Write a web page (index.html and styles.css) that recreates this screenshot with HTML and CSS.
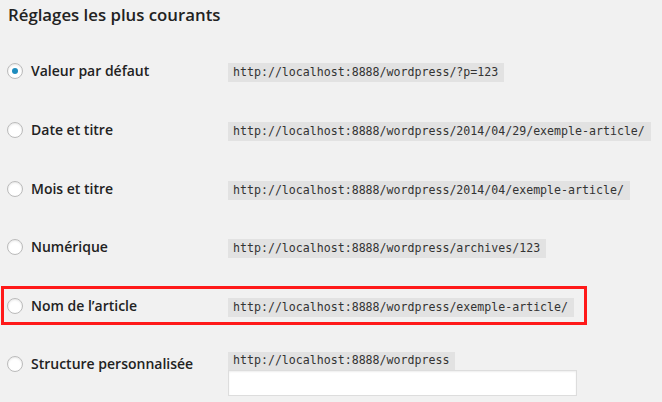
FILE: index.html
```html
<!DOCTYPE html>
<html lang="fr">
<head>
<meta charset="utf-8">
<link rel="stylesheet" href="styles.css">
</head>
<body>
<div class="page">
  <h3 class="title">Réglages les plus courants</h3>
  <div class="rows">
    <div class="row">
      <label class="label"><span class="radio checked"></span>Valeur par défaut</label>
      <div class="value"><code>http://localhost:8888/wordpress/?p=123</code></div>
    </div>
    <div class="row">
      <label class="label"><span class="radio"></span>Date et titre</label>
      <div class="value"><code>http://localhost:8888/wordpress/2014/04/29/exemple-article/</code></div>
    </div>
    <div class="row">
      <label class="label"><span class="radio"></span>Mois et titre</label>
      <div class="value"><code>http://localhost:8888/wordpress/2014/04/exemple-article/</code></div>
    </div>
    <div class="row">
      <label class="label"><span class="radio"></span>Numérique</label>
      <div class="value"><code>http://localhost:8888/wordpress/archives/123</code></div>
    </div>
    <div class="row highlighted">
      <label class="label"><span class="radio"></span>Nom de l’article</label>
      <div class="value"><code>http://localhost:8888/wordpress/exemple-article/</code></div>
    </div>
    <div class="row custom">
      <label class="label"><span class="radio"></span>Structure personnalisée</label>
      <div class="value stack">
        <code>http://localhost:8888/wordpress</code>
        <span class="input"></span>
      </div>
    </div>
  </div>
</div>
</body>
</html>
```

FILE: styles.css
```css
html, body {
  margin: 0;
  padding: 0;
  background: #f1f1f1;
}
body {
  width: 662px;
  height: 402px;
  overflow: hidden;
  font-family: "Open Sans", "DejaVu Sans", sans-serif;
  color: #222;
}
.page {
  padding: 0 0 0 7px;
}
.title {
  margin: 0;
  padding: 0 0 0 1px;
  height: 41.7px;
  font-size: 16.8px;
  font-weight: 600;
  line-height: 30px;
  color: #222;
}
.rows {
  display: flex;
  flex-direction: column;
}
.row {
  display: flex;
  align-items: center;
  height: 58.6px;
}
.label {
  display: flex;
  align-items: center;
  width: 221px;
  flex: none;
  font-size: 14px;
  font-weight: 600;
  line-height: 20px;
  color: #222;
  padding-top: 1px;
}
.radio {
  box-sizing: border-box;
  width: 16px;
  height: 16px;
  border: 1px solid #bbb;
  border-radius: 50%;
  background: #fff;
  box-shadow: inset 0 1px 2px rgba(0,0,0,0.1);
  margin-right: 8px;
  display: flex;
  align-items: center;
  justify-content: center;
  flex: none;
}
.radio.checked::after {
  content: "";
  width: 6px;
  height: 6px;
  border-radius: 50%;
  background: #1e8cbe;
}
code {
  display: inline-block;
  font-family: "DejaVu Sans Mono", "Liberation Mono", monospace;
  font-size: 11.6px;
  line-height: 13px;
  padding: 3px 6px 3px 5px;
  background: #e2e2e2;
  color: #333;
}
.highlighted {
  outline: 3px solid #ff1a1a;
  outline-offset: -3px;
  margin-left: -6px;
  padding-left: 6px;
  width: 580px;
  height: 39px;
  margin-top: 9.8px;
  margin-bottom: 9.8px;
}
.custom {
  align-items: flex-start;
}
.custom .label {
  padding-top: 19.3px;
}
.stack {
  display: flex;
  flex-direction: column;
  align-items: flex-start;
  padding-top: 17.3px;
}
.stack code {
  padding-top: 2px;
  padding-bottom: 3px;
}
.input {
  display: block;
  box-sizing: border-box;
  width: 349px;
  height: 26px;
  background: #fff;
  border: 1px solid #ddd;
  box-shadow: inset 0 1px 2px rgba(0,0,0,0.07);
}
```
